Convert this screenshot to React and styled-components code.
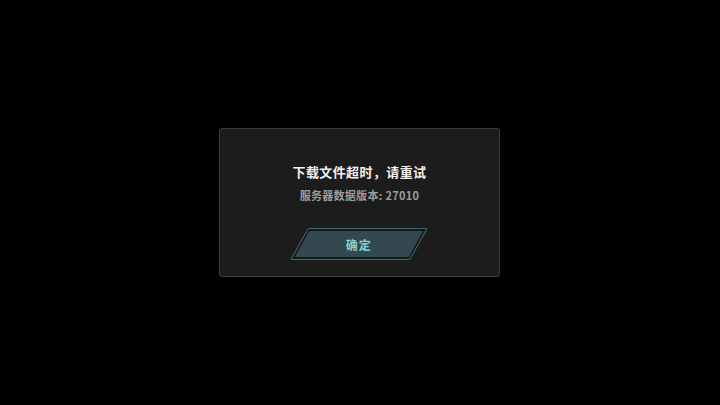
import React from "react";
import styled, { createGlobalStyle } from "styled-components";

const Global = createGlobalStyle`
  html, body { margin: 0; padding: 0; background: #000; }
  body { font-family: "Noto Sans CJK SC", "Noto Sans", sans-serif; }
`;

const Page = styled.div`
  width: 720px;
  height: 405px;
  background: #000;
  display: flex;
  align-items: center;
  justify-content: center;
`;

const Dialog = styled.div`
  box-sizing: border-box;
  width: 281px;
  height: 149px;
  margin-left: -1px;
  background: #1c1c1c;
  border: 1px solid #3b3b3b;
  border-radius: 3px;
  display: flex;
  flex-direction: column;
  align-items: center;
  padding-top: 35px;
`;

const Title = styled.div`
  color: #f2f2f2;
  font-size: 13px;
  font-weight: 700;
  line-height: 16px;
  letter-spacing: 0.4px;
`;

const Sub = styled.div`
  margin-top: 8px;
  color: #9c9c9c;
  font-size: 11px;
  font-weight: 700;
  line-height: 14px;
  letter-spacing: 0.3px;
`;

const Button = styled.button`
  margin-top: 26px;
  margin-left: -1px;
  box-sizing: border-box;
  width: 120px;
  height: 32px;
  transform: skewX(-29deg);
  background: #34484f;
  border: 1px solid #46666e;
  box-shadow: inset 0 0 0 2px #121719;
  border-radius: 2px;
  display: flex;
  align-items: center;
  justify-content: center;
  padding: 0;
  cursor: pointer;
`;

const Label = styled.span`
  transform: skewX(29deg);
  color: #86d3d3;
  font-family: "Noto Sans CJK SC", sans-serif;
  font-size: 12px;
  font-weight: 700;
  letter-spacing: 1px;
`;

export default function App() {
  return (
    <>
      <Global />
      <Page>
        <Dialog>
          <Title>下载文件超时，请重试</Title>
          <Sub>服务器数据版本: 27010</Sub>
          <Button>
            <Label>确定</Label>
          </Button>
        </Dialog>
      </Page>
    </>
  );
}
